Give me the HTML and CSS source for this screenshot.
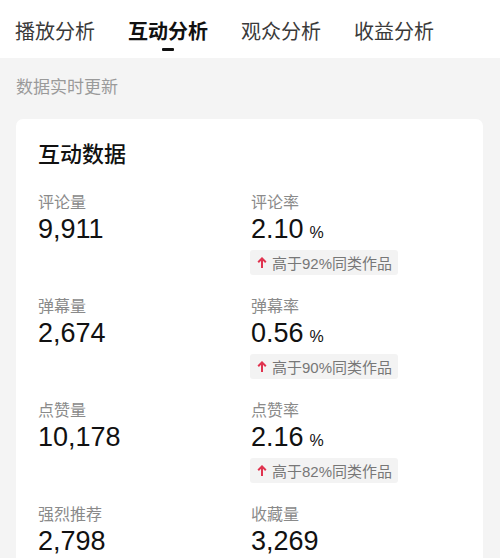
FILE: index.html
```html
<!DOCTYPE html>
<html lang="zh-CN">
<head>
    <meta charset="UTF-8">
    <title>互动分析</title>
    <link rel="stylesheet" href="styles.css">
</head>
<body>
<ul class="tabs">
    <li>播放分析</li>
    <li class="active">互动分析</li>
    <li>观众分析</li>
    <li>收益分析</li>
</ul>
<p class="notice">数据实时更新</p>
<div class="card">
    <h2 class="card_title">互动数据</h2>
    <div class="stats">
        <div class="stat">
            <p class="stat_label">评论量</p>
            <p class="stat_value">9,911</p>
        </div>
        <div class="stat">
            <p class="stat_label">评论率</p>
            <p class="stat_value">2.10<span class="unit">%</span></p>
            <span class="badge">
                <svg class="arrow" viewBox="0 0 10 12"><path d="M5 11V1.6M1.2 5.2L5 1.4l3.8 3.8"/></svg>
                高于92%同类作品
            </span>
        </div>
        <div class="stat">
            <p class="stat_label">弹幕量</p>
            <p class="stat_value">2,674</p>
        </div>
        <div class="stat">
            <p class="stat_label">弹幕率</p>
            <p class="stat_value">0.56<span class="unit">%</span></p>
            <span class="badge">
                <svg class="arrow" viewBox="0 0 10 12"><path d="M5 11V1.6M1.2 5.2L5 1.4l3.8 3.8"/></svg>
                高于90%同类作品
            </span>
        </div>
        <div class="stat">
            <p class="stat_label">点赞量</p>
            <p class="stat_value">10,178</p>
        </div>
        <div class="stat">
            <p class="stat_label">点赞率</p>
            <p class="stat_value">2.16<span class="unit">%</span></p>
            <span class="badge">
                <svg class="arrow" viewBox="0 0 10 12"><path d="M5 11V1.6M1.2 5.2L5 1.4l3.8 3.8"/></svg>
                高于82%同类作品
            </span>
        </div>
        <div class="stat">
            <p class="stat_label">强烈推荐</p>
            <p class="stat_value">2,798</p>
        </div>
        <div class="stat">
            <p class="stat_label">收藏量</p>
            <p class="stat_value">3,269</p>
        </div>
    </div>
</div>
</body>
</html>
```

FILE: styles.css
```css
*{
    margin: 0;
    padding: 0;
    list-style: none;
    border: none;
}
body{
    background-color: #f4f4f4;
    font-family: "Liberation Sans", "Noto Sans CJK SC", sans-serif;
    color: #111;
}
.tabs{
    display: flex;
    gap: 33px;
    height: 58px;
    padding: 20px 0 0 15px;
    box-sizing: border-box;
    background-color: #fff;
}
.tabs li{
    position: relative;
    font-size: 20px;
    line-height: 24px;
    color: #3a3a3a;
}
.tabs li.active{
    color: #111;
    font-weight: bold;
}
.tabs li.active::after{
    content: "";
    position: absolute;
    left: 50%;
    top: 28px;
    width: 12px;
    height: 3px;
    margin-left: -6px;
    border-radius: 1px;
    background-color: #111;
}
.notice{
    padding: 18px 16px 0;
    font-size: 17px;
    line-height: 24px;
    color: #9a9a9a;
}
.card{
    margin: 19px 17px 0 16px;
    padding: 21px 22px 24px;
    border-radius: 7px;
    background-color: #fff;
}
.card_title{
    font-size: 22px;
    line-height: 30px;
    font-weight: 500;
    color: #111;
}
.stats{
    display: grid;
    grid-template-columns: 213px 1fr;
    row-gap: 21px;
    margin-top: 22px;
}
.stat{
    display: flex;
    flex-direction: column;
    align-items: flex-start;
}
.stat_label{
    font-size: 16px;
    line-height: 22px;
    color: #8a8a8a;
}
.stat_value{
    height: 30px;
    font-size: 27px;
    line-height: 30px;
    color: #111;
}
.unit{
    margin-left: 6px;
    font-size: 16px;
    line-height: 1;
}
.badge{
    display: flex;
    align-items: center;
    gap: 5px;
    margin: 6px 0 0 -1px;
    height: 25px;
    padding: 0 6px 0 7px;
    border-radius: 3px;
    background-color: #f3f3f3;
    font-size: 15px;
    color: #777;
}
.arrow{
    width: 10px;
    height: 12px;
    fill: none;
    stroke: #e0334f;
    stroke-width: 2;
}
```
